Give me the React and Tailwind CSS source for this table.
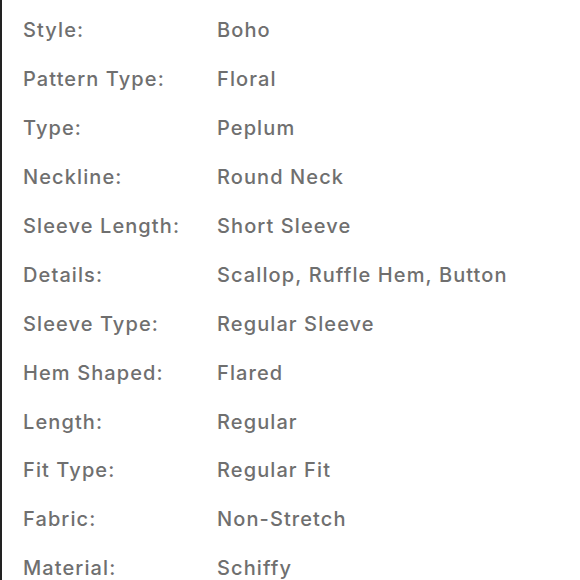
import React from "react";

// Product attributes table
const specs = [
  ["Style:", "Boho"],
  ["Pattern Type:", "Floral"],
  ["Type:", "Peplum"],
  ["Neckline:", "Round Neck"],
  ["Sleeve Length:", "Short Sleeve"],
  ["Details:", "Scallop, Ruffle Hem, Button"],
  ["Sleeve Type:", "Regular Sleeve"],
  ["Hem Shaped:", "Flared"],
  ["Length:", "Regular"],
  ["Fit Type:", "Regular Fit"],
  ["Fabric:", "Non-Stretch"],
  ["Material:", "Schiffy"],
];

const App = () => {
  return (
    <div className="w-[580px] h-[580px] overflow-hidden bg-white flex">
      <div className="w-[2px] h-full bg-[#222]" />
      <div
        className="flex-1 pt-[6px] pl-[21px] text-[#6f6f6f] text-[20px] font-medium tracking-[1.1px]"
        style={{ fontFamily: "Inter, 'Noto Sans', sans-serif" }}
      >
        {specs.map(([label, value]) => (
          <div key={label} className="flex items-center h-[48.9px]">
            <div className="w-[194px] shrink-0">{label}</div>
            <div>{value}</div>
          </div>
        ))}
      </div>
    </div>
  );
};

export default App;
